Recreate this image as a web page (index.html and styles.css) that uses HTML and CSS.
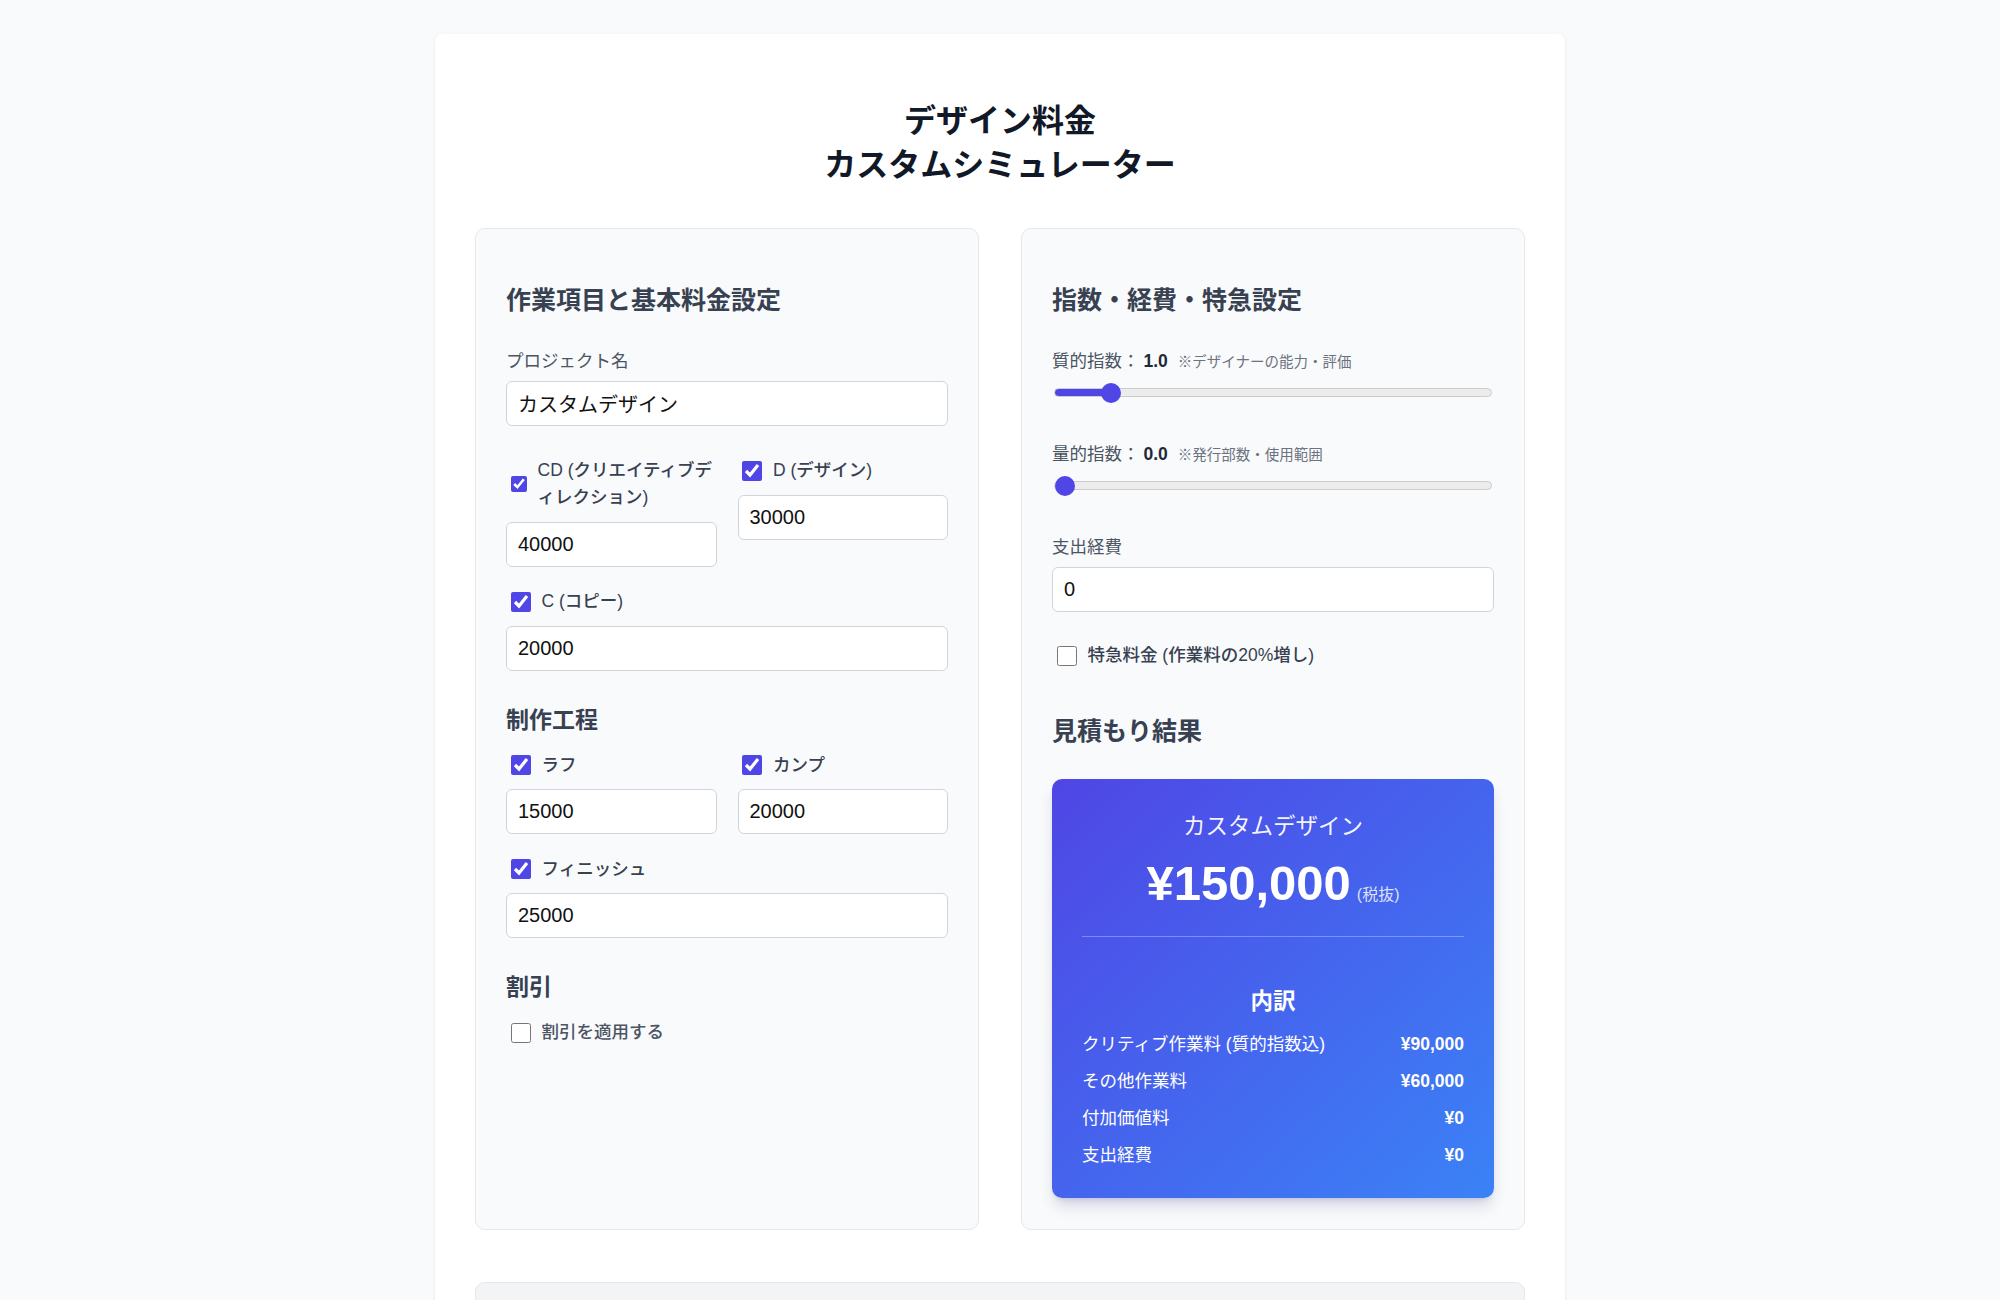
FILE: index.html
```html
<!DOCTYPE html>
<html lang="ja">
<head>
<meta charset="utf-8">
<title>デザイン料金カスタムシミュレーター</title>
<link rel="stylesheet" href="styles.css">
</head>
<body>
<main class="sheet">
  <h1 class="title">デザイン料金<br>カスタムシミュレーター</h1>

  <div class="columns">
    <section class="panel">
      <h2 class="panel-title">作業項目と基本料金設定</h2>

      <div class="field field-project">
        <label class="label" for="project">プロジェクト名</label>
        <input id="project" class="text-input" type="text" value="カスタムデザイン">
      </div>

      <div class="pair">
        <div class="cell">
          <label class="check"><input type="checkbox" class="box box-shrunk" checked><span class="check-text">CD (クリエイティブディレクション)</span></label>
          <input class="text-input" type="text" value="40000">
        </div>
        <div class="cell">
          <label class="check"><input type="checkbox" class="box" checked><span class="check-text">D (デザイン)</span></label>
          <input class="text-input" type="text" value="30000">
        </div>
      </div>

      <div class="field">
        <label class="check"><input type="checkbox" class="box" checked><span class="check-text">C (コピー)</span></label>
        <input class="text-input" type="text" value="20000">
      </div>

      <h3 class="sub-title">制作工程</h3>
      <div class="pair">
        <div class="cell">
          <label class="check"><input type="checkbox" class="box" checked><span class="check-text">ラフ</span></label>
          <input class="text-input" type="text" value="15000">
        </div>
        <div class="cell">
          <label class="check"><input type="checkbox" class="box" checked><span class="check-text">カンプ</span></label>
          <input class="text-input" type="text" value="20000">
        </div>
      </div>
      <div class="field">
        <label class="check"><input type="checkbox" class="box" checked><span class="check-text">フィニッシュ</span></label>
        <input class="text-input" type="text" value="25000">
      </div>

      <h3 class="sub-title">割引</h3>
      <label class="check check-plain"><input type="checkbox" class="box"><span class="check-text">割引を適用する</span></label>
    </section>

    <section class="panel">
      <h2 class="panel-title">指数・経費・特急設定</h2>

      <div class="slider-group">
        <div class="slider-label"><span>質的指数：</span><span class="slider-value">1.0</span><span class="slider-note">※デザイナーの能力・評価</span></div>
        <input class="range" type="range" min="0.5" max="5" step="0.1" value="1.0" style="--fill: 13%">
      </div>

      <div class="slider-group slider-group-next">
        <div class="slider-label"><span>量的指数：</span><span class="slider-value">0.0</span><span class="slider-note">※発行部数・使用範囲</span></div>
        <input class="range" type="range" min="0" max="5" step="0.1" value="0" style="--fill: 0%">
      </div>

      <div class="field-expense">
        <label class="label" for="expense">支出経費</label>
        <input id="expense" class="text-input" type="text" value="0">
      </div>

      <label class="check check-rush"><input type="checkbox" class="box"><span class="check-text">特急料金 (作業料の20%増し)</span></label>

      <h2 class="panel-title result-heading">見積もり結果</h2>

      <div class="result">
        <div class="result-name">カスタムデザイン</div>
        <div class="result-price"><span class="price">¥150,000</span><span class="tax">(税抜)</span></div>
        <div class="rule"></div>
        <div class="breakdown-title">内訳</div>
        <ul class="breakdown">
          <li class="row"><span>クリティブ作業料 (質的指数込)</span><span class="amount">¥90,000</span></li>
          <li class="row"><span>その他作業料</span><span class="amount">¥60,000</span></li>
          <li class="row"><span>付加価値料</span><span class="amount">¥0</span></li>
          <li class="row"><span>支出経費</span><span class="amount">¥0</span></li>
        </ul>
      </div>
    </section>
  </div>

  <section class="extra"></section>
</main>
</body>
</html>
```

FILE: styles.css
```css
* {
  box-sizing: border-box;
}

html,
body {
  margin: 0;
}

body {
  background: #f9fafb;
  font-family: "Liberation Sans", "Noto Sans CJK JP", sans-serif;
  color: #374151;
}

.sheet {
  width: 1130px;
  margin: 34px auto 0;
  padding: 40px 40px 60px;
  background: #ffffff;
  border-radius: 8px;
  box-shadow: 0 1px 4px rgba(15, 23, 42, 0.06), 0 1px 2px rgba(15, 23, 42, 0.04);
}

.title {
  margin: 22px 0 44px;
  text-align: center;
  font-family: "Noto Sans CJK JP", sans-serif;
  font-size: 32px;
  line-height: 44px;
  font-weight: 700;
  color: #111827;
}

.columns {
  display: grid;
  grid-template-columns: 1fr 1fr;
  gap: 42px;
}

.panel {
  background: #f9fafb;
  border: 1px solid #e5e7eb;
  border-radius: 10px;
  padding: 52px 30px 31px;
}

.panel-title {
  margin: 0 0 32px;
  font-family: "Noto Sans CJK JP", sans-serif;
  font-size: 25px;
  line-height: 35px;
  font-weight: 700;
  color: #374151;
}

.sub-title {
  margin: 31px 0 18px;
  font-family: "Noto Sans CJK JP", sans-serif;
  font-size: 23px;
  line-height: 32px;
  font-weight: 700;
  color: #374151;
}

.field + .field,
.pair + .field,
.field + .pair,
.pair + .pair {
  margin-top: 21.5px;
}

.field-project {
  margin-bottom: 31px;
}

.field-project + .pair {
  margin-top: 0;
}

.label {
  display: block;
  margin-bottom: 6px;
  font-size: 17.5px;
  line-height: 27px;
  color: #4b5563;
}

.text-input {
  display: block;
  width: 100%;
  height: 45px;
  padding: 0 11px;
  border: 1px solid #d1d5db;
  border-radius: 6px;
  background: #ffffff;
  font-family: "Liberation Sans", "Noto Sans CJK JP", sans-serif;
  font-size: 20px;
  color: #111111;
  outline: none;
}

.pair {
  display: grid;
  grid-template-columns: 1fr 1fr;
  column-gap: 21px;
  align-items: start;
}

.check {
  display: flex;
  align-items: center;
  margin-bottom: 10.5px;
  font-size: 17.5px;
  line-height: 27px;
  font-weight: 500;
  color: #374151;
}

.check-text {
  margin-left: 8px;
  line-break: loose;
}

.box {
  flex: none;
  width: 20px;
  height: 20px;
  margin: 3px 3px 3px 4.5px;
  accent-color: #4f46e5;
}

.box-shrunk {
  width: 16px;
  height: 16px;
}

.check-plain {
  margin-bottom: 0;
  color: #4b5563;
}

.slider-label {
  display: flex;
  align-items: baseline;
  font-size: 17.5px;
  line-height: 27px;
  color: #4b5563;
}

.slider-value {
  margin-left: 4px;
  font-weight: 600;
  color: #1f2937;
}

.slider-note {
  margin-left: 10px;
  font-size: 14.5px;
  color: #6b7280;
}

.slider-group-next {
  margin-top: 38.5px;
}

.range {
  -webkit-appearance: none;
  appearance: none;
  display: block;
  width: calc(100% - 4px);
  height: 20px;
  margin: 6.5px 2px 0;
  background: transparent;
}

.range::-webkit-slider-runnable-track {
  height: 9px;
  border: 1px solid #cccccc;
  border-radius: 5px;
  background: linear-gradient(to right, #4f46e5 var(--fill), #ececec var(--fill));
}

.range::-webkit-slider-thumb {
  -webkit-appearance: none;
  appearance: none;
  width: 20px;
  height: 20px;
  margin-top: -6.5px;
  border: none;
  border-radius: 50%;
  background: #4f46e5;
}

.field-expense {
  margin-top: 38.5px;
}

.field-expense .label {
  margin-bottom: 5.5px;
}

.check-rush {
  margin: 30.5px 0 0;
}

.result-heading {
  margin: 43px 0 31.5px;
}

.result {
  padding: 30.5px 30px 28.5px;
  border-radius: 10px;
  background: linear-gradient(to bottom right, #4f46e5, #3b82f6);
  color: #ffffff;
  text-align: center;
  box-shadow: 0 10px 15px -3px rgba(30, 41, 120, 0.18), 0 4px 6px -4px rgba(30, 41, 120, 0.18);
}

.result-name {
  font-family: "Noto Sans CJK JP", sans-serif;
  font-size: 22.5px;
  line-height: 31px;
  color: rgba(255, 255, 255, 0.95);
}

.result-price {
  margin-top: 15.5px;
  height: 54px;
  line-height: 54px;
}

.price {
  font-size: 49px;
  font-weight: 700;
  line-height: 54px;
}

.tax {
  margin-left: 6px;
  font-size: 16px;
  line-height: 1;
  color: rgba(255, 255, 255, 0.82);
}

.rule {
  height: 1px;
  margin-top: 26px;
  background: rgba(255, 255, 255, 0.3);
}

.breakdown-title {
  margin: 47.5px 0 16px;
  font-family: "Noto Sans CJK JP", sans-serif;
  font-size: 22.5px;
  line-height: 31px;
  font-weight: 700;
}

.breakdown {
  display: flex;
  flex-direction: column;
  gap: 10px;
  margin: 0;
  padding: 0;
  list-style: none;
}

.row {
  display: flex;
  justify-content: space-between;
  font-size: 17.5px;
  line-height: 27px;
  text-align: left;
}

.amount {
  font-weight: 600;
}

.extra {
  min-height: 260px;
  margin-top: 52px;
  background: #f3f4f6;
  border: 1px solid #e5e7eb;
  border-radius: 10px;
}
```
